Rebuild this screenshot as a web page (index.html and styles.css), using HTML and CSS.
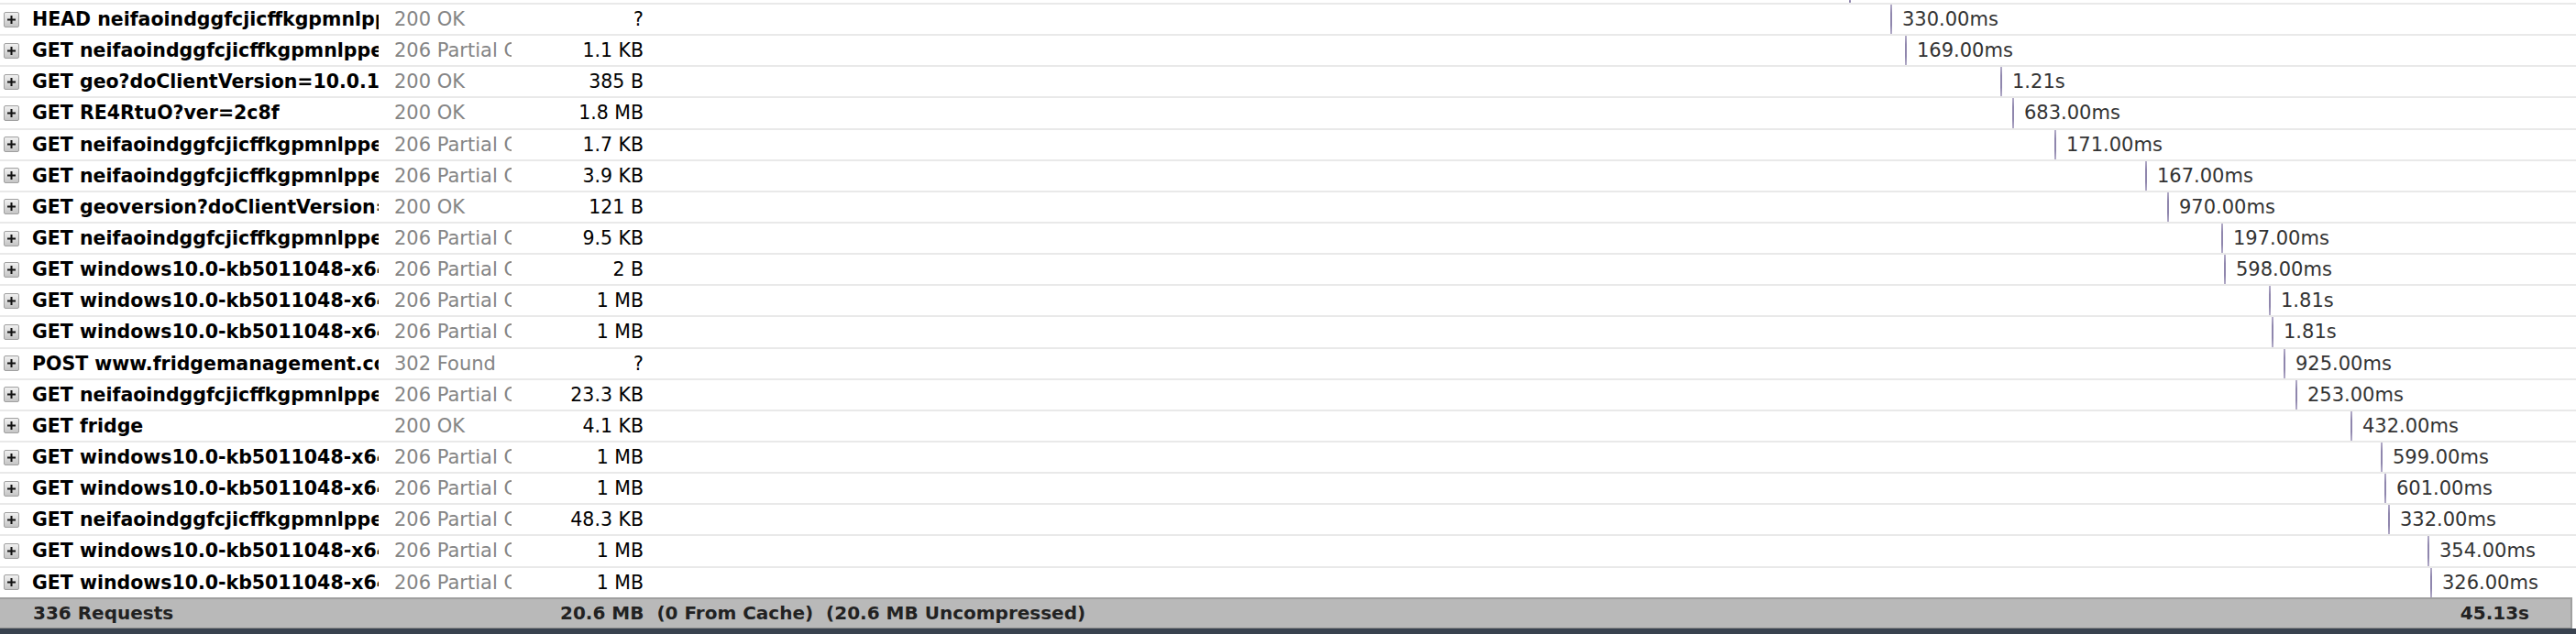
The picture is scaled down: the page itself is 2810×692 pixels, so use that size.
FILE: index.html
```html
<!DOCTYPE html>
<html>
<head>
<meta charset="utf-8">
<link rel="stylesheet" href="styles.css">
</head>
<body>
<div class="net">
  <div class="lead"><div class="time"><span class="bar" style="margin-left:1315px"></span></div></div>

  <div class="row"><span class="twisty"><svg viewBox="0 0 17 17"><defs><linearGradient id="tg" x1="0" y1="0" x2="0" y2="1"><stop offset="0" stop-color="#f2f2f2"/><stop offset="1" stop-color="#c4c4c4"/></linearGradient></defs><rect x="0.5" y="0.5" width="16" height="16" rx="1.5" fill="url(#tg)" class="tw-box"/><path d="M4 8.5h9M8.5 4v9" class="tw-plus"/></svg></span><span class="name">HEAD neifaoindggfcjicffkgpmnlppeffabag</span><span class="status">200 OK</span><span class="size">?</span><div class="time"><span class="bar" style="margin-left:1360px"></span><span class="label">330.00ms</span></div></div>

  <div class="row"><span class="twisty"><svg viewBox="0 0 17 17"><rect x="0.5" y="0.5" width="16" height="16" rx="1.5" fill="url(#tg)" class="tw-box"/><path d="M4 8.5h9M8.5 4v9" class="tw-plus"/></svg></span><span class="name">GET neifaoindggfcjicffkgpmnlppeffabag</span><span class="status">206 Partial Content</span><span class="size">1.1 KB</span><div class="time"><span class="bar" style="margin-left:1376px"></span><span class="label">169.00ms</span></div></div>

  <div class="row"><span class="twisty"><svg viewBox="0 0 17 17"><rect x="0.5" y="0.5" width="16" height="16" rx="1.5" fill="url(#tg)" class="tw-box"/><path d="M4 8.5h9M8.5 4v9" class="tw-plus"/></svg></span><span class="name">GET geo?doClientVersion=10.0.19041</span><span class="status">200 OK</span><span class="size">385 B</span><div class="time"><span class="bar" style="margin-left:1480px"></span><span class="label">1.21s</span></div></div>

  <div class="row"><span class="twisty"><svg viewBox="0 0 17 17"><rect x="0.5" y="0.5" width="16" height="16" rx="1.5" fill="url(#tg)" class="tw-box"/><path d="M4 8.5h9M8.5 4v9" class="tw-plus"/></svg></span><span class="name">GET RE4RtuO?ver=2c8f</span><span class="status">200 OK</span><span class="size">1.8 MB</span><div class="time"><span class="bar" style="margin-left:1493px"></span><span class="label">683.00ms</span></div></div>

  <div class="row"><span class="twisty"><svg viewBox="0 0 17 17"><rect x="0.5" y="0.5" width="16" height="16" rx="1.5" fill="url(#tg)" class="tw-box"/><path d="M4 8.5h9M8.5 4v9" class="tw-plus"/></svg></span><span class="name">GET neifaoindggfcjicffkgpmnlppeffabag</span><span class="status">206 Partial Content</span><span class="size">1.7 KB</span><div class="time"><span class="bar" style="margin-left:1539px"></span><span class="label">171.00ms</span></div></div>

  <div class="row"><span class="twisty"><svg viewBox="0 0 17 17"><rect x="0.5" y="0.5" width="16" height="16" rx="1.5" fill="url(#tg)" class="tw-box"/><path d="M4 8.5h9M8.5 4v9" class="tw-plus"/></svg></span><span class="name">GET neifaoindggfcjicffkgpmnlppeffabag</span><span class="status">206 Partial Content</span><span class="size">3.9 KB</span><div class="time"><span class="bar" style="margin-left:1638px"></span><span class="label">167.00ms</span></div></div>

  <div class="row"><span class="twisty"><svg viewBox="0 0 17 17"><rect x="0.5" y="0.5" width="16" height="16" rx="1.5" fill="url(#tg)" class="tw-box"/><path d="M4 8.5h9M8.5 4v9" class="tw-plus"/></svg></span><span class="name">GET geoversion?doClientVersion=10.0</span><span class="status">200 OK</span><span class="size">121 B</span><div class="time"><span class="bar" style="margin-left:1662px"></span><span class="label">970.00ms</span></div></div>

  <div class="row"><span class="twisty"><svg viewBox="0 0 17 17"><rect x="0.5" y="0.5" width="16" height="16" rx="1.5" fill="url(#tg)" class="tw-box"/><path d="M4 8.5h9M8.5 4v9" class="tw-plus"/></svg></span><span class="name">GET neifaoindggfcjicffkgpmnlppeffabag</span><span class="status">206 Partial Content</span><span class="size">9.5 KB</span><div class="time"><span class="bar" style="margin-left:1721px"></span><span class="label">197.00ms</span></div></div>

  <div class="row"><span class="twisty"><svg viewBox="0 0 17 17"><rect x="0.5" y="0.5" width="16" height="16" rx="1.5" fill="url(#tg)" class="tw-box"/><path d="M4 8.5h9M8.5 4v9" class="tw-plus"/></svg></span><span class="name">GET windows10.0-kb5011048-x64</span><span class="status">206 Partial Content</span><span class="size">2 B</span><div class="time"><span class="bar" style="margin-left:1724px"></span><span class="label">598.00ms</span></div></div>

  <div class="row"><span class="twisty"><svg viewBox="0 0 17 17"><rect x="0.5" y="0.5" width="16" height="16" rx="1.5" fill="url(#tg)" class="tw-box"/><path d="M4 8.5h9M8.5 4v9" class="tw-plus"/></svg></span><span class="name">GET windows10.0-kb5011048-x64</span><span class="status">206 Partial Content</span><span class="size">1 MB</span><div class="time"><span class="bar" style="margin-left:1773px"></span><span class="label">1.81s</span></div></div>

  <div class="row"><span class="twisty"><svg viewBox="0 0 17 17"><rect x="0.5" y="0.5" width="16" height="16" rx="1.5" fill="url(#tg)" class="tw-box"/><path d="M4 8.5h9M8.5 4v9" class="tw-plus"/></svg></span><span class="name">GET windows10.0-kb5011048-x64</span><span class="status">206 Partial Content</span><span class="size">1 MB</span><div class="time"><span class="bar" style="margin-left:1776px"></span><span class="label">1.81s</span></div></div>

  <div class="row"><span class="twisty"><svg viewBox="0 0 17 17"><rect x="0.5" y="0.5" width="16" height="16" rx="1.5" fill="url(#tg)" class="tw-box"/><path d="M4 8.5h9M8.5 4v9" class="tw-plus"/></svg></span><span class="name">POST www.fridgemanagement.com</span><span class="status">302 Found</span><span class="size">?</span><div class="time"><span class="bar" style="margin-left:1789px"></span><span class="label">925.00ms</span></div></div>

  <div class="row"><span class="twisty"><svg viewBox="0 0 17 17"><rect x="0.5" y="0.5" width="16" height="16" rx="1.5" fill="url(#tg)" class="tw-box"/><path d="M4 8.5h9M8.5 4v9" class="tw-plus"/></svg></span><span class="name">GET neifaoindggfcjicffkgpmnlppeffabag</span><span class="status">206 Partial Content</span><span class="size">23.3 KB</span><div class="time"><span class="bar" style="margin-left:1802px"></span><span class="label">253.00ms</span></div></div>

  <div class="row"><span class="twisty"><svg viewBox="0 0 17 17"><rect x="0.5" y="0.5" width="16" height="16" rx="1.5" fill="url(#tg)" class="tw-box"/><path d="M4 8.5h9M8.5 4v9" class="tw-plus"/></svg></span><span class="name">GET fridge</span><span class="status">200 OK</span><span class="size">4.1 KB</span><div class="time"><span class="bar" style="margin-left:1862px"></span><span class="label">432.00ms</span></div></div>

  <div class="row"><span class="twisty"><svg viewBox="0 0 17 17"><rect x="0.5" y="0.5" width="16" height="16" rx="1.5" fill="url(#tg)" class="tw-box"/><path d="M4 8.5h9M8.5 4v9" class="tw-plus"/></svg></span><span class="name">GET windows10.0-kb5011048-x64</span><span class="status">206 Partial Content</span><span class="size">1 MB</span><div class="time"><span class="bar" style="margin-left:1895px"></span><span class="label">599.00ms</span></div></div>

  <div class="row"><span class="twisty"><svg viewBox="0 0 17 17"><rect x="0.5" y="0.5" width="16" height="16" rx="1.5" fill="url(#tg)" class="tw-box"/><path d="M4 8.5h9M8.5 4v9" class="tw-plus"/></svg></span><span class="name">GET windows10.0-kb5011048-x64</span><span class="status">206 Partial Content</span><span class="size">1 MB</span><div class="time"><span class="bar" style="margin-left:1899px"></span><span class="label">601.00ms</span></div></div>

  <div class="row"><span class="twisty"><svg viewBox="0 0 17 17"><rect x="0.5" y="0.5" width="16" height="16" rx="1.5" fill="url(#tg)" class="tw-box"/><path d="M4 8.5h9M8.5 4v9" class="tw-plus"/></svg></span><span class="name">GET neifaoindggfcjicffkgpmnlppeffabag</span><span class="status">206 Partial Content</span><span class="size">48.3 KB</span><div class="time"><span class="bar" style="margin-left:1903px"></span><span class="label">332.00ms</span></div></div>

  <div class="row"><span class="twisty"><svg viewBox="0 0 17 17"><rect x="0.5" y="0.5" width="16" height="16" rx="1.5" fill="url(#tg)" class="tw-box"/><path d="M4 8.5h9M8.5 4v9" class="tw-plus"/></svg></span><span class="name">GET windows10.0-kb5011048-x64</span><span class="status">206 Partial Content</span><span class="size">1 MB</span><div class="time"><span class="bar" style="margin-left:1946px"></span><span class="label">354.00ms</span></div></div>

  <div class="row"><span class="twisty"><svg viewBox="0 0 17 17"><rect x="0.5" y="0.5" width="16" height="16" rx="1.5" fill="url(#tg)" class="tw-box"/><path d="M4 8.5h9M8.5 4v9" class="tw-plus"/></svg></span><span class="name">GET windows10.0-kb5011048-x64</span><span class="status">206 Partial Content</span><span class="size">1 MB</span><div class="time"><span class="bar" style="margin-left:1949px"></span><span class="label">326.00ms</span></div></div>

  <div class="foot">
    <span class="f-count">336 Requests</span>
    <span class="f-size">20.6 MB&nbsp; (0 From Cache)&nbsp; (20.6 MB Uncompressed)</span>
    <span class="f-time">45.13s</span>
  </div>
</div>
</body>
</html>
```

FILE: styles.css
```css
html, body {
  margin: 0;
  padding: 0;
  background: #39424f;
  width: 2810px;
  height: 692px;
  overflow: hidden;
}

.net {
  background: #ffffff;
  font-family: "DejaVu Sans", "Liberation Sans", sans-serif;
  color: #000;
}

.lead {
  height: 3px;
  display: grid;
  grid-template-columns: 702px 1fr;
  overflow: hidden;
}
.lead .time { grid-column: 2; }

.row {
  box-sizing: border-box;
  height: 34.15px;
  border-top: 2px solid #e9e9e9;
  display: grid;
  grid-template-columns: 35px 378px 17px 128px 144px 1fr;
  align-items: center;
  white-space: nowrap;
}

.twisty {
  display: flex;
  align-items: center;
  padding-left: 4px;
}
.twisty svg {
  width: 17px;
  height: 17px;
  display: block;
}
.tw-box {
  stroke: #a0a0a0;
  stroke-width: 1;
}
.tw-plus {
  stroke: #111;
  stroke-width: 2;
  fill: none;
}

.name {
  font-weight: bold;
  font-size: 20.5px;
  overflow: hidden;
  line-height: 32px;
}
.status {
  grid-column: 4;
  font-size: 21px;
  color: #858585;
  overflow: hidden;
  line-height: 32px;
}
.size {
  grid-column: 5;
  font-size: 20.5px;
  text-align: right;
  line-height: 32px;
}

.time {
  align-self: stretch;
  display: flex;
  align-items: center;
  height: 100%;
}
.bar {
  width: 2px;
  align-self: stretch;
  background: linear-gradient(#b3acc8, #8f86ad 30%, #8f86ad 70%, #b3acc8);
  flex: none;
}
.label {
  margin-left: 11px;
  font-size: 21px;
  color: #333;
  line-height: 32px;
}

.foot {
  box-sizing: border-box;
  height: 34px;
  background: #b9b9b9;
  border-top: 2px solid #9f9f9f;
  border-bottom: 1px solid #8d8d8d;
  border-right: 2px solid #9f9f9f;
  width: 2806px;
  display: grid;
  grid-template-columns: 36px 575px 1fr auto;
  align-items: center;
  font-weight: bold;
  font-size: 20px;
  color: #222;
  white-space: nowrap;
}
.f-count { grid-column: 2; }
.f-size { grid-column: 3; }
.f-time { grid-column: 4; padding-right: 45px; }
```
